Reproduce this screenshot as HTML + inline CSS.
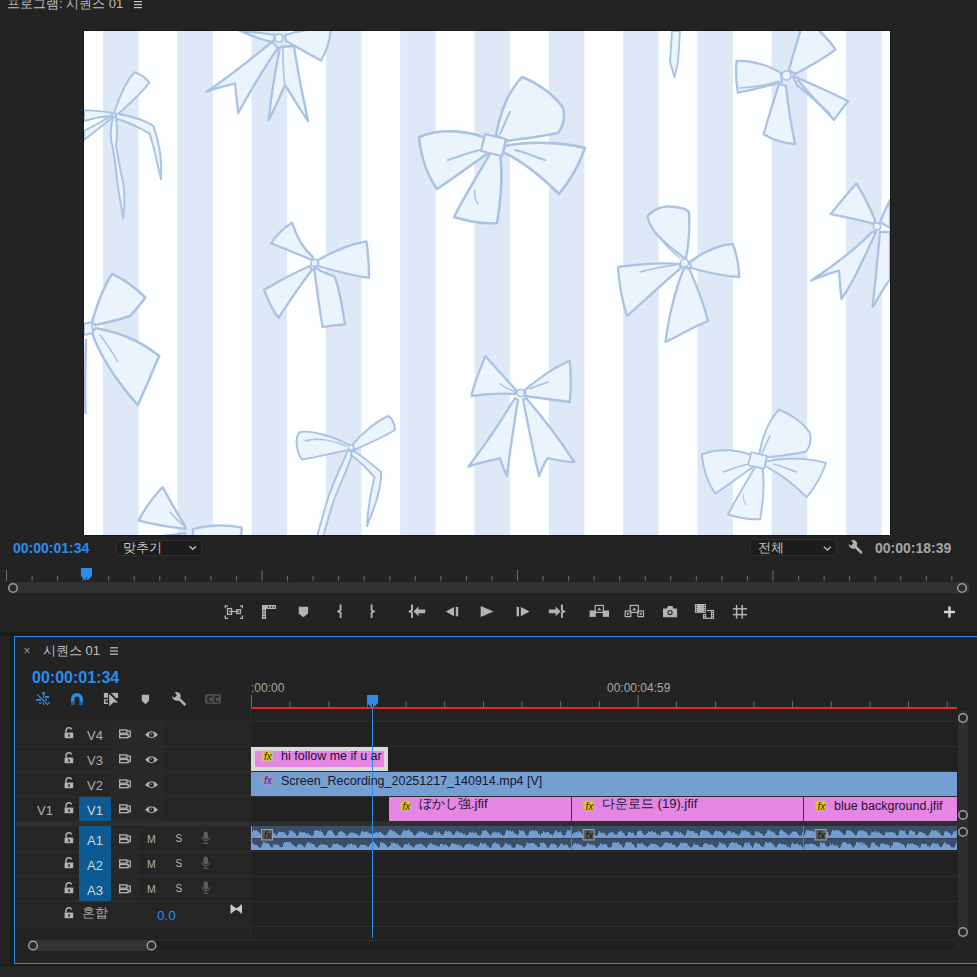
<!DOCTYPE html><html><head><meta charset="utf-8"><style>
*{margin:0;padding:0;box-sizing:border-box}
html,body{width:977px;height:977px;overflow:hidden;background:#252525;font-family:"Liberation Sans",sans-serif;}
.a{position:absolute}
.t{position:absolute;white-space:nowrap;line-height:1}
svg{position:absolute;left:0;top:0}
</style></head><body>
<div class="a" style="left:0;top:0;width:977px;height:632px;background:#232323"></div>
<div class="a" style="left:0;top:632px;width:977px;height:4px;background:#1a1a1a"></div>
<div class="a" style="left:10px;top:632px;width:4px;height:334px;background:#1a1a1a"></div>
<div class="a" style="left:0;top:636px;width:10px;height:328px;background:#232323"></div>
<div class="a" style="left:0;top:964px;width:977px;height:2px;background:#1a1a1a"></div>
<div class="t" style="left:7px;top:-3px;font-size:13px;color:#bdbdbd">프로그램: 시퀀스 01</div>
<div class="a" style="left:84px;top:31px;width:806px;height:504px;background:#fdfeff;overflow:hidden;box-shadow:0 0 0 1px #161616"><svg width="806" height="504" viewBox="0 0 806 504"><defs><filter id="bl" x="-5%" y="-5%" width="110%" height="110%"><feGaussianBlur stdDeviation="0.7"/></filter></defs><g filter="url(#bl)"><rect x="-10" y="-10" width="826" height="524" fill="#fdfeff"/><rect x="19.0" y="0" width="35.5" height="504" fill="#dee8f6"/><rect x="93.3" y="0" width="35.5" height="504" fill="#dee8f6"/><rect x="167.6" y="0" width="35.5" height="504" fill="#dee8f6"/><rect x="241.9" y="0" width="35.5" height="504" fill="#dee8f6"/><rect x="316.2" y="0" width="35.5" height="504" fill="#dee8f6"/><rect x="390.5" y="0" width="35.5" height="504" fill="#dee8f6"/><rect x="464.8" y="0" width="35.5" height="504" fill="#dee8f6"/><rect x="539.1" y="0" width="35.5" height="504" fill="#dee8f6"/><rect x="613.4" y="0" width="35.5" height="504" fill="#dee8f6"/><rect x="687.7" y="0" width="35.5" height="504" fill="#dee8f6"/><rect x="762.0" y="0" width="35.5" height="504" fill="#dee8f6"/><rect x="836.3" y="0" width="35.5" height="504" fill="#dee8f6"/><g transform="translate(-84,-31)"><path d="M 490.0,140.0 C 470.0,130.0 440.0,128.0 419.0,137.0 C 421.0,158.0 428.0,176.0 437.0,189.0 C 455.0,177.0 474.0,163.0 491.0,151.0 Z" fill="#ebf3fc" stroke="#aac2e3" stroke-width="2.53" stroke-linejoin="round"/><path d="M 496.0,135.0 C 500.0,112.0 508.0,92.0 522.0,77.0 C 540.0,84.0 556.0,97.0 563.0,108.0 C 566.0,120.0 562.0,128.0 558.0,133.0 C 540.0,137.0 520.0,139.0 505.0,141.0 Z" fill="#ebf3fc" stroke="#aac2e3" stroke-width="2.53" stroke-linejoin="round"/><path d="M 505.0,146.0 C 530.0,141.0 560.0,142.0 585.0,148.0 C 579.0,165.0 569.0,182.0 559.0,194.0 C 541.0,176.0 522.0,161.0 503.0,152.0 Z" fill="#ebf3fc" stroke="#aac2e3" stroke-width="2.53" stroke-linejoin="round"/><path d="M 491.0,152.0 C 478.0,175.0 464.0,197.0 454.0,217.0 C 470.0,222.0 485.0,224.0 497.0,223.0 C 501.0,200.0 503.0,176.0 500.0,154.0 Z" fill="#ebf3fc" stroke="#aac2e3" stroke-width="2.53" stroke-linejoin="round"/><path d="M 485.0,134.0 L 506.0,139.0 L 502.0,156.0 L 481.0,151.0 Z" fill="#ebf3fc" stroke="#aac2e3" stroke-width="2.30" stroke-linejoin="round"/><path d="M 448.0,160.0 C 460.0,156.0 470.0,152.0 480.0,150.0" fill="none" stroke="#aac2e3" stroke-width="2.2" stroke-linecap="round"/><path d="M 515.0,150.0 C 525.0,152.0 535.0,157.0 545.0,160.0" fill="none" stroke="#aac2e3" stroke-width="2.2" stroke-linecap="round"/><path d="M 510.0,112.0 C 506.0,120.0 503.0,128.0 500.0,134.0" fill="none" stroke="#aac2e3" stroke-width="2.0" stroke-linecap="round"/><path d="M 475.0,190.0 C 474.0,196.0 475.0,200.0 478.0,204.0" fill="none" stroke="#aac2e3" stroke-width="1.4" stroke-linecap="round"/><path d="M 755.0,456.8 C 740.0,449.2 717.5,447.8 701.8,454.5 C 703.2,470.2 708.5,483.8 715.2,493.5 C 728.8,484.5 743.0,474.0 755.8,465.0 Z" fill="#ebf3fc" stroke="#aac2e3" stroke-width="1.90" stroke-linejoin="round"/><path d="M 759.5,453.0 C 762.5,435.8 768.5,420.8 779.0,409.5 C 792.5,414.8 804.5,424.5 809.8,432.8 C 812.0,441.8 809.0,447.8 806.0,451.5 C 792.5,454.5 777.5,456.0 766.2,457.5 Z" fill="#ebf3fc" stroke="#aac2e3" stroke-width="1.90" stroke-linejoin="round"/><path d="M 766.2,461.2 C 785.0,457.5 807.5,458.2 826.2,462.8 C 821.8,475.5 814.2,488.2 806.8,497.2 C 793.2,483.8 779.0,472.5 764.8,465.8 Z" fill="#ebf3fc" stroke="#aac2e3" stroke-width="1.90" stroke-linejoin="round"/><path d="M 755.8,465.8 C 746.0,483.0 735.5,499.5 728.0,514.5 C 740.0,518.2 751.2,519.8 760.2,519.0 C 763.2,501.8 764.8,483.8 762.5,467.2 Z" fill="#ebf3fc" stroke="#aac2e3" stroke-width="1.90" stroke-linejoin="round"/><path d="M 751.2,452.2 L 767.0,456.0 L 764.0,468.8 L 748.2,465.0 Z" fill="#ebf3fc" stroke="#aac2e3" stroke-width="1.72" stroke-linejoin="round"/><path d="M 723.5,471.8 C 732.5,468.8 740.0,465.8 747.5,464.2" fill="none" stroke="#aac2e3" stroke-width="1.6500000000000001" stroke-linecap="round"/><path d="M 773.8,464.2 C 781.2,465.8 788.8,469.5 796.2,471.8" fill="none" stroke="#aac2e3" stroke-width="1.6500000000000001" stroke-linecap="round"/><path d="M 770.0,435.8 C 767.0,441.8 764.8,447.8 762.5,452.2" fill="none" stroke="#aac2e3" stroke-width="1.5" stroke-linecap="round"/><path d="M 743.8,494.2 C 743.0,498.8 743.8,501.8 746.0,504.8" fill="none" stroke="#aac2e3" stroke-width="1.0499999999999998" stroke-linecap="round"/><path d="M684,258 C668,245 650,233 647.5,216 C655,208 664,206 669,206.5 C680,207 688,209 689,213 C690,232 688,248 686,258 Z" fill="#ebf3fc" stroke="#aac2e3" stroke-width="2.30" stroke-linejoin="round"/><path d="M690,262 C703,252 718,245 732.7,244 C737,255 739,266 739.2,277 C722,276 705,272 691,268 Z" fill="#ebf3fc" stroke="#aac2e3" stroke-width="2.30" stroke-linejoin="round"/><path d="M679,264 C660,262 640,264 618,267 C619,285 622,300 627,316 C645,300 663,283 681,268 Z" fill="#ebf3fc" stroke="#aac2e3" stroke-width="2.30" stroke-linejoin="round"/><path d="M684,268 C675,290 668,320 665.5,342 C680,335 695,326 708,321 C703,300 695,282 689,268 Z" fill="#ebf3fc" stroke="#aac2e3" stroke-width="2.30" stroke-linejoin="round"/><circle cx="684.5" cy="263" r="4" fill="#ebf3fc" stroke="#aac2e3" stroke-width="1.6"/><path d="M657,234 C665,245 672,252 680,258" fill="none" stroke="#aac2e3" stroke-width="1.4" stroke-linecap="round"/><path d="M640,272 C655,268 665,266 676,265" fill="none" stroke="#aac2e3" stroke-width="1.4" stroke-linecap="round"/><path d="M781,73 C770,66 752,60 736.5,61 C735.5,72 736.5,84 737.9,92.6 C752,90 768,86 782,82 Z" fill="#ebf3fc" stroke="#aac2e3" stroke-width="2.30" stroke-linejoin="round"/><path d="M789,70 C793,55 797,42 801,29 L818,29 C825,37 832,43 835.3,49.6 C825,58 812,65 795,74 Z" fill="#ebf3fc" stroke="#aac2e3" stroke-width="2.30" stroke-linejoin="round"/><path d="M793,76 C812,84 832,93 848.2,101.2 C843,108 838,114 833.9,119.8 C822,106 810,95 797,85 Z" fill="#ebf3fc" stroke="#aac2e3" stroke-width="2.30" stroke-linejoin="round"/><path d="M779,84 C774,100 768,118 763.7,134.2 C773,140 785,143 795.2,144.2 C791,125 788,105 786,86 Z" fill="#ebf3fc" stroke="#aac2e3" stroke-width="2.30" stroke-linejoin="round"/><circle cx="786.5" cy="75.5" r="4.5" fill="#ebf3fc" stroke="#aac2e3" stroke-width="1.6"/><path d="M740,88 C755,87 768,85 779,81" fill="none" stroke="#aac2e3" stroke-width="1.6" stroke-linecap="round"/><path d="M798,80 C808,92 818,104 830,114" fill="none" stroke="#aac2e3" stroke-width="2.2" stroke-linecap="round"/><path d="M672,31 L680,31 L678,62 L674.5,77 L670,62 Z" fill="#ebf3fc" stroke="#aac2e3" stroke-width="1.84" stroke-linejoin="round"/><path d="M272,42 C252,58 228,78 206.4,91.6 C216,88 226,86 235,83.4 C236,93 237,103 238.3,112.9 C250,92 262,70 278,48 Z" fill="#ebf3fc" stroke="#aac2e3" stroke-width="2.30" stroke-linejoin="round"/><path d="M280,47 C275,72 271,97 268.6,120.3 C275,108 280,96 285,85 C293,97 300,110 308,121 C304,100 298,75 294,46 Z" fill="#ebf3fc" stroke="#aac2e3" stroke-width="2.30" stroke-linejoin="round"/><path d="M285,35 C300,30 315,28 330.8,29 C330,42 326,52 321,60.5 C310,55 297,47 286,41 Z" fill="#ebf3fc" stroke="#aac2e3" stroke-width="2.30" stroke-linejoin="round"/><path d="M275,35 C262,33 248,32 236,29 C245,33 260,40 273,42 Z" fill="#ebf3fc" stroke="#aac2e3" stroke-width="2.30" stroke-linejoin="round"/><circle cx="279" cy="38" r="4" fill="#ebf3fc" stroke="#aac2e3" stroke-width="1.6"/><path d="M283,47 C283,65 284,80 285,85" fill="none" stroke="#aac2e3" stroke-width="1.6" stroke-linecap="round"/><path d="M312,260 C298,254 282,248 271.3,243.3 C276,235 284,228 292,222.6 C296,235 302,248 313,257 Z" fill="#ebf3fc" stroke="#aac2e3" stroke-width="2.30" stroke-linejoin="round"/><path d="M318,260 C332,252 350,244 366.5,241.3 C368,252 369,266 369,277.9 C355,276 342,273 318,266 Z" fill="#ebf3fc" stroke="#aac2e3" stroke-width="2.30" stroke-linejoin="round"/><path d="M310,266 C295,272 278,282 264,289.8 C268,300 272,310 278.6,317.8 C289,302 300,285 312,270 Z" fill="#ebf3fc" stroke="#aac2e3" stroke-width="2.30" stroke-linejoin="round"/><path d="M314,268 C316,280 318,300 322.5,327 C330,326 338,325 345,324.4 C342,305 338,285 334.5,276.5 C328,274 320,271 316,268 Z" fill="#ebf3fc" stroke="#aac2e3" stroke-width="2.30" stroke-linejoin="round"/><circle cx="314.6" cy="263" r="3.6" fill="#ebf3fc" stroke="#aac2e3" stroke-width="1.6"/><path d="M92,322 C97,305 104,285 112.4,273.8 C125,280 138,290 145.4,297.6 C140,305 135,311 130,316 C118,320 105,323 95,325 Z" fill="#ebf3fc" stroke="#aac2e3" stroke-width="2.53" stroke-linejoin="round"/><path d="M92,332 C97,350 115,380 137.8,405 C145,390 152,372 159.3,356 C145,345 130,335 96,328 Z" fill="#ebf3fc" stroke="#aac2e3" stroke-width="2.53" stroke-linejoin="round"/><path d="M84,324 L92,322 L93,333 L84,335 Z" fill="#ebf3fc" stroke="#aac2e3" stroke-width="1.84" stroke-linejoin="round"/><path d="M86,340 C85,370 85,395 85.5,413" fill="none" stroke="#aac2e3" stroke-width="2.4" stroke-linecap="round"/><path d="M100,335 C108,345 114,355 118,362" fill="none" stroke="#aac2e3" stroke-width="1.4" stroke-linecap="round"/><path d="M874,224 C860,220 845,217 830.5,214.2 C838,205 848,193 856.3,183.5 C864,195 870,208 875,220 Z" fill="#ebf3fc" stroke="#aac2e3" stroke-width="2.30" stroke-linejoin="round"/><path d="M872,232 C855,250 830,268 810.9,280.6 C820,277 830,273 839,270.7 C840,285 841,295 841.4,299 C855,280 865,255 876,232 Z" fill="#ebf3fc" stroke="#aac2e3" stroke-width="2.30" stroke-linejoin="round"/><path d="M880,232 C878,255 875,285 872.6,307 C880,295 885,285 890,280 L890,232 Z" fill="#ebf3fc" stroke="#aac2e3" stroke-width="2.30" stroke-linejoin="round"/><path d="M880,222 C884,212 888,205 890,200 L890,228 Z" fill="#ebf3fc" stroke="#aac2e3" stroke-width="2.30" stroke-linejoin="round"/><circle cx="877" cy="226.5" r="3.6" fill="#ebf3fc" stroke="#aac2e3" stroke-width="1.6"/><path d="M516,390 C505,378 494,366 485.3,356 C480,370 474,383 471.5,396 C485,394 500,393 515,394 Z" fill="#ebf3fc" stroke="#aac2e3" stroke-width="2.30" stroke-linejoin="round"/><path d="M525,390 C537,380 552,368 569.8,360.8 C571,375 571,390 569.8,402 C555,400 540,398 525,396 Z" fill="#ebf3fc" stroke="#aac2e3" stroke-width="2.30" stroke-linejoin="round"/><path d="M515,398 C502,420 485,445 468.4,466.8 C480,462 495,460 500,458 C502,465 504,470 506.8,476 C510,450 514,425 518,400 Z" fill="#ebf3fc" stroke="#aac2e3" stroke-width="2.30" stroke-linejoin="round"/><path d="M523,399 C528,425 533,450 539,476 C542,468 545,462 548,458 C556,460 566,462 574.4,462 C560,440 545,420 526,398 Z" fill="#ebf3fc" stroke="#aac2e3" stroke-width="2.30" stroke-linejoin="round"/><circle cx="520.6" cy="393" r="3.8" fill="#ebf3fc" stroke="#aac2e3" stroke-width="1.6"/><path d="M500,384 C505,388 510,390 514,391" fill="none" stroke="#aac2e3" stroke-width="1.6" stroke-linecap="round"/><path d="M530,389 C536,386 542,384 548,382" fill="none" stroke="#aac2e3" stroke-width="1.6" stroke-linecap="round"/><path d="M186,529 C170,527 150,524 138.6,520.4 C145,508 154,496 162.6,487.2 C170,500 176,512 184,524 Z" fill="#ebf3fc" stroke="#aac2e3" stroke-width="2.30" stroke-linejoin="round"/><path d="M193,529 C208,525 225,524 241.8,527.7 C242,532 241,535 240,537 L193,537 Z" fill="#ebf3fc" stroke="#aac2e3" stroke-width="2.30" stroke-linejoin="round"/><path d="M185,533 C175,535 165,536 150,537 L186,537 Z" fill="#ebf3fc" stroke="#aac2e3" stroke-width="2.30" stroke-linejoin="round"/><path d="M170,512 C175,518 180,522 184,526" fill="none" stroke="#aac2e3" stroke-width="1.4" stroke-linecap="round"/><path d="M114,113 C120,95 127,80 134.5,72.2 C140,74 146,78 149.3,82.6 C140,95 128,105 117,115 Z" fill="#ebf3fc" stroke="#aac2e3" stroke-width="1.95" stroke-linejoin="round"/><path d="M112,113 C102,111 92,110 84,110.5 L84,121 C95,118 104,116 112,116 Z" fill="#ebf3fc" stroke="#aac2e3" stroke-width="1.95" stroke-linejoin="round"/><path d="M112,118 C103,125 93,133 84,140 L84,131 C93,126 103,121 111,116 Z" fill="#ebf3fc" stroke="#aac2e3" stroke-width="1.95" stroke-linejoin="round"/><path d="M116,113.5 C130,116 145,120 153.5,126 C159,142 162.5,160 161,179.5 C157.5,165 154.5,148 149.5,133.5 C140,128 128,122 116,118.5 Z" fill="#ebf3fc" stroke="#aac2e3" stroke-width="1.95" stroke-linejoin="round"/><path d="M113,117 C110,130 110,140 112.7,147 C114,157 116,165 116.2,173 C118,190 121,205 123.2,218.4 C125,205 126,190 121,173 C119,162 117,152 116,145 C118,135 117,125 116,117 Z" fill="#ebf3fc" stroke="#aac2e3" stroke-width="1.95" stroke-linejoin="round"/><path d="M348,450 C342,465 334,480 328,498 C324,512 320,525 317,537 L323.5,537 C326,525 330,512 334,500 C340,484 348,468 353,452 Z" fill="#ebf3fc" stroke="#aac2e3" stroke-width="1.95" stroke-linejoin="round"/><path d="M352,450 C362,456 372,464 381,472 C381.5,490 374,508 367,526 C367.5,508 371.5,490 374.5,477 C367,469 360,461 351,455 Z" fill="#ebf3fc" stroke="#aac2e3" stroke-width="1.95" stroke-linejoin="round"/><path d="M349,445 C335,437 312,430 300,432 C294.5,436 296,452 302,459.5 C315,458 335,452 349,450 Z" fill="#ebf3fc" stroke="#aac2e3" stroke-width="1.95" stroke-linejoin="round"/><path d="M305,441 C318,437 335,441 346,446" fill="none" stroke="#aac2e3" stroke-width="1.5" stroke-linecap="round"/><path d="M353,444 C362,433 377,421 388,416 C392,418 395,424 395,430 C383,437 368,444 354,450 Z" fill="#ebf3fc" stroke="#aac2e3" stroke-width="1.95" stroke-linejoin="round"/><circle cx="351" cy="447.5" r="2.6" fill="#ebf3fc" stroke="#aac2e3" stroke-width="1.4"/></g></g></svg></div>
<div class="t" style="left:13px;top:541px;font-size:14px;font-weight:bold;color:#2d8ceb">00:00:01:34</div>
<div class="a" style="left:116px;top:540px;width:86px;height:16px;background:#1d1d1d;border:1px solid #2f2f2f;border-radius:3px"></div>
<div class="t" style="left:123px;top:541px;font-size:13px;color:#c8c8c8">맞추기</div>
<div class="a" style="left:750px;top:539px;width:87px;height:17px;background:#1d1d1d;border:1px solid #2f2f2f;border-radius:3px"></div>
<div class="t" style="left:758px;top:541px;font-size:13px;color:#c8c8c8">전체</div>
<div class="t" style="left:875px;top:541px;font-size:14px;font-weight:bold;color:#a6a6a6">00:00:18:39</div>
<div class="a" style="left:14px;top:636px;width:980px;height:328px;border:1px solid #2d8ceb;background:#232323"></div>
<svg width="977" height="977" viewBox="0 0 977 977">
<rect x="134" y="1" width="8" height="1.2" fill="#c4c4c4"/>
<rect x="134" y="4" width="8" height="1.2" fill="#c4c4c4"/>
<rect x="134" y="7" width="8" height="1.2" fill="#c4c4c4"/>
<rect x="110" y="647.2" width="8" height="1.2" fill="#c4c4c4"/>
<rect x="110" y="650.4" width="8" height="1.2" fill="#c4c4c4"/>
<rect x="110" y="653.6" width="8" height="1.2" fill="#c4c4c4"/>
<rect x="6.00" y="570" width="1" height="11" fill="#6e6e6e"/>
<rect x="31.55" y="576" width="1" height="5" fill="#6e6e6e"/>
<rect x="57.10" y="576" width="1" height="5" fill="#6e6e6e"/>
<rect x="82.65" y="576" width="1" height="5" fill="#6e6e6e"/>
<rect x="108.20" y="576" width="1" height="5" fill="#6e6e6e"/>
<rect x="133.75" y="576" width="1" height="5" fill="#6e6e6e"/>
<rect x="159.30" y="576" width="1" height="5" fill="#6e6e6e"/>
<rect x="184.85" y="576" width="1" height="5" fill="#6e6e6e"/>
<rect x="210.40" y="576" width="1" height="5" fill="#6e6e6e"/>
<rect x="235.95" y="576" width="1" height="5" fill="#6e6e6e"/>
<rect x="261.50" y="570" width="1" height="11" fill="#6e6e6e"/>
<rect x="287.05" y="576" width="1" height="5" fill="#6e6e6e"/>
<rect x="312.60" y="576" width="1" height="5" fill="#6e6e6e"/>
<rect x="338.15" y="576" width="1" height="5" fill="#6e6e6e"/>
<rect x="363.70" y="576" width="1" height="5" fill="#6e6e6e"/>
<rect x="389.25" y="576" width="1" height="5" fill="#6e6e6e"/>
<rect x="414.80" y="576" width="1" height="5" fill="#6e6e6e"/>
<rect x="440.35" y="576" width="1" height="5" fill="#6e6e6e"/>
<rect x="465.90" y="576" width="1" height="5" fill="#6e6e6e"/>
<rect x="491.45" y="576" width="1" height="5" fill="#6e6e6e"/>
<rect x="517.00" y="570" width="1" height="11" fill="#6e6e6e"/>
<rect x="542.55" y="576" width="1" height="5" fill="#6e6e6e"/>
<rect x="568.10" y="576" width="1" height="5" fill="#6e6e6e"/>
<rect x="593.65" y="576" width="1" height="5" fill="#6e6e6e"/>
<rect x="619.20" y="576" width="1" height="5" fill="#6e6e6e"/>
<rect x="644.75" y="576" width="1" height="5" fill="#6e6e6e"/>
<rect x="670.30" y="576" width="1" height="5" fill="#6e6e6e"/>
<rect x="695.85" y="576" width="1" height="5" fill="#6e6e6e"/>
<rect x="721.40" y="576" width="1" height="5" fill="#6e6e6e"/>
<rect x="746.95" y="576" width="1" height="5" fill="#6e6e6e"/>
<rect x="772.50" y="570" width="1" height="11" fill="#6e6e6e"/>
<rect x="798.05" y="576" width="1" height="5" fill="#6e6e6e"/>
<rect x="823.60" y="576" width="1" height="5" fill="#6e6e6e"/>
<rect x="849.15" y="576" width="1" height="5" fill="#6e6e6e"/>
<rect x="874.70" y="576" width="1" height="5" fill="#6e6e6e"/>
<rect x="900.25" y="576" width="1" height="5" fill="#6e6e6e"/>
<rect x="925.80" y="576" width="1" height="5" fill="#6e6e6e"/>
<rect x="951.35" y="576" width="1" height="5" fill="#6e6e6e"/>
<rect x="8" y="582" width="962" height="11" rx="5" fill="#313131"/>
<circle cx="13" cy="588" r="4.3" fill="#2a2a2a" stroke="#9a9a9a" stroke-width="1.6"/>
<circle cx="962" cy="588" r="4.3" fill="#2a2a2a" stroke="#9a9a9a" stroke-width="1.6"/>
<path d="M81 568 H92 V576 L88 580 H85 L81 576 Z" fill="#2d8ceb"/>
<rect x="86" y="577" width="1" height="4" fill="#1c3a5c"/>
<g fill="none" stroke="#b3b3b3" stroke-width="1.3"><path d="M225.3 608.2 V605.9 H228.1"/><path d="M239.9 605.9 H242.4 V608.2"/><path d="M225.3 615.6 V618.3 H228.1"/><path d="M239.9 618.3 H242.4 V615.6"/><rect x="227.55" y="608.55" width="4" height="5.8"/><rect x="236.75" y="609.65" width="3.7" height="3.8"/><path d="M229.2 611.5 H238.6"/></g>
<path d="M262 605 H276 V609 H266 V619 H262 Z" fill="#b3b3b3"/>
<rect x="267.9" y="606.3" width="1.2" height="1.6" fill="#232323"/>
<rect x="270.7" y="606.3" width="1.2" height="1.6" fill="#232323"/>
<rect x="273.4" y="606.3" width="1.2" height="1.6" fill="#232323"/>
<rect x="263.2" y="610.1999999999999" width="1.6" height="1.2" fill="#232323"/>
<rect x="263.2" y="613.1999999999999" width="1.6" height="1.2" fill="#232323"/>
<rect x="263.2" y="616.0" width="1.6" height="1.2" fill="#232323"/>
<path d="M298.7 606.7 H308.1 V613.5 L303.4 617.2 L298.7 613.5 Z" fill="#b3b3b3"/>
<path d="M340.6 604.4 V610 L338.4 611.4 L340.6 612.8 V618" fill="none" stroke="#b3b3b3" stroke-width="1.9"/>
<path d="M371.6 604.4 V610 L373.8 611.4 L371.6 612.8 V618" fill="none" stroke="#b3b3b3" stroke-width="1.9"/>
<path d="M412 604.4 V610 L409.8 611.4 L412 612.8 V618" fill="none" stroke="#b3b3b3" stroke-width="1.9"/>
<path d="M413.5 611.4 L418.5 606.6 V609.6 H425.3 V613.2 H418.5 V616.2 Z" fill="#b3b3b3"/>
<path d="M445.8 611.6 L454 606.9 V616.3 Z" fill="#b3b3b3"/><rect x="455.8" y="606.9" width="2.4" height="9.4" fill="#b3b3b3"/>
<path d="M480.7 605.9 L493.6 611.4 L480.7 616.9 Z" fill="#b3b3b3"/>
<rect x="516.6" y="606.9" width="2.4" height="9.4" fill="#b3b3b3"/><path d="M520.8 606.9 L529.5 611.6 L520.8 616.3 Z" fill="#b3b3b3"/>
<path d="M548.8 609.6 H555.6 V606.6 L560.6 611.4 L555.6 616.2 V613.2 H548.8 Z" fill="#b3b3b3"/>
<path d="M561.9 604.4 V610 L564.1 611.4 L561.9 612.8 V618" fill="none" stroke="#b3b3b3" stroke-width="1.9"/>
<rect x="589.6" y="610.5" width="6.2" height="6.4" fill="#b3b3b3"/><rect x="602.8" y="610.5" width="6.2" height="6.4" fill="#b3b3b3"/>
<rect x="595.2" y="605.4" width="8.2" height="7" fill="none" stroke="#b3b3b3" stroke-width="1.2"/>
<path d="M597.2 610.2 L599.3 607.4 L601.4 610.2 Z" fill="#b3b3b3"/>
<g fill="none" stroke="#b3b3b3" stroke-width="1.2"><rect x="625.2" y="611" width="5.6" height="5.6"/><rect x="637.9" y="611" width="5.6" height="5.6"/><rect x="630.2" y="605.4" width="8.2" height="7"/></g>
<path d="M632.2 610.2 L634.3 607.4 L636.4 610.2 Z" fill="#b3b3b3"/>
<path d="M627 612.2 L629.6 613.8 L627 615.4 Z" fill="#b3b3b3"/><path d="M641.7 612.2 L639.1 613.8 L641.7 615.4 Z" fill="#b3b3b3"/>
<path d="M663 608.4 H666.8 L668 606 H672.4 L673.6 608.4 H677.1 V617.2 H663 Z" fill="#b3b3b3"/>
<circle cx="670" cy="612.6" r="2.6" fill="#232323"/><circle cx="670" cy="612.6" r="1.5" fill="#b3b3b3"/>
<rect x="694.9" y="604" width="11" height="8.9" fill="#b3b3b3"/>
<g fill="#b3b3b3"><rect x="703" y="613.9" width="3.1" height="5"/><rect x="711" y="609.9" width="3.1" height="9"/><rect x="707" y="609.9" width="4" height="1.3"/><rect x="703" y="617.6" width="11" height="1.3"/></g>
<g fill="#232323"><circle cx="696.5" cy="605.5" r="0.6"/><circle cx="704.4" cy="605.5" r="0.6"/><circle cx="696.5" cy="607.5" r="0.6"/><circle cx="704.4" cy="607.5" r="0.6"/><circle cx="696.5" cy="609.5" r="0.6"/><circle cx="704.4" cy="609.5" r="0.6"/><circle cx="696.5" cy="611.5" r="0.6"/><circle cx="704.4" cy="611.5" r="0.6"/><circle cx="704.5" cy="615.5" r="0.6"/><circle cx="704.5" cy="617.5" r="0.6"/><circle cx="712.6" cy="611.5" r="0.6"/><circle cx="712.6" cy="613.5" r="0.6"/><circle cx="712.6" cy="615.5" r="0.6"/><circle cx="712.6" cy="617.5" r="0.6"/></g>
<g stroke="#b3b3b3" stroke-width="1.5"><path d="M736.6 604.9 V618.7"/><path d="M742.2 604.9 V618.7"/><path d="M732.8 608.8 H747"/><path d="M732.8 614.6 H747"/></g>
<g stroke="#d6d6d6" stroke-width="2.4"><path d="M949.5 606.5 V617.5"/><path d="M944 612 H955"/></g>
<g fill="#2d8ceb"><rect x="42.2" y="691.9" width="2.8" height="2.3" rx="0.6"/><rect x="43.1" y="693.5" width="1.1" height="5"/><rect x="43.1" y="702.6" width="1.1" height="2.4"/><rect x="45" y="696.1" width="4" height="2"/><rect x="36.2" y="699" width="4.9" height="1.8"/><rect x="45.3" y="699" width="1.7" height="1.8"/><rect x="39.1" y="702.3" width="2.7" height="1.4"/><rect x="48" y="702.3" width="1.9" height="1.4"/></g>
<path d="M37.4 694.6 L47.5 704.5" stroke="#232323" stroke-width="2.4"/><path d="M37.4 694.6 L47.5 704.5" stroke="#2d8ceb" stroke-width="1.3" stroke-linecap="round"/>
<path d="M71 705 V699 A6 6 0 0 1 83 699 V705 H79.6 V699 A2.6 2.6 0 0 0 74.4 699 V705 Z" fill="#2d8ceb"/>
<rect x="71" y="701.5" width="3.4" height="3.5" fill="#1e5ea0"/><rect x="79.6" y="701.5" width="3.4" height="3.5" fill="#1e5ea0"/>
<rect x="103.9" y="692.9" width="4.1" height="4.9" fill="#b3b3b3"/>
<path d="M108 699.9 H104.6 V703.3 H108" fill="none" stroke="#b3b3b3" stroke-width="1.4"/>
<rect x="110.8" y="692.9" width="7.2" height="5.1" fill="#b3b3b3"/>
<path d="M109.6 693 L119 702.4" stroke="#232323" stroke-width="2"/>
<path d="M109 693.8 L118 702.6 L113.3 702.5 L109.3 706.3 Z" fill="#b3b3b3"/>
<path d="M141.8 694.7 H149.1 V700.8 L145.45 704.2 L141.8 700.8 Z" fill="#b3b3b3"/>
<path d="M172.2 696 L174.6 697.7 L176.9 695.4 L175.2 692.8 Q175 692.3 174.6 692.2 Q178.4 691.2 180.2 694 Q181.2 696.2 180.3 698.3 L185.8 703.8 Q186.4 705.4 184.6 706 L178.8 700.4 Q176.4 701.4 174.2 700 Q171.8 698.4 172.2 696 Z" fill="#b3b3b3"/>
<rect x="204.9" y="693.9" width="16.1" height="10.1" rx="2.2" fill="#4b4b4b"/>
<g fill="none" stroke="#222" stroke-width="1.5"><path d="M212.2 696.8 Q208 695.6 208 699.3 Q208 702.8 212.2 701.8"/><path d="M219 696.8 Q214.8 695.6 214.8 699.3 Q214.8 702.8 219 701.8"/></g>
<path d="M172.2 696 L174.6 697.7 L176.9 695.4 L175.2 692.8 Q175 692.3 174.6 692.2 Q178.4 691.2 180.2 694 Q181.2 696.2 180.3 698.3 L185.8 703.8 Q186.4 705.4 184.6 706 L178.8 700.4 Q176.4 701.4 174.2 700 Q171.8 698.4 172.2 696 Z" fill="#b3b3b3" transform="translate(676.5,-152)"/>
<path d="M189.6 546.2 L192.8 549.3 L196 546.2" fill="none" stroke="#c0c0c0" stroke-width="1.3"/>
<path d="M823.8 546.6 L827.4 550 L831 546.6" fill="none" stroke="#c0c0c0" stroke-width="1.3"/>
<rect x="15" y="721" width="235" height="205" fill="#252525"/>
<rect x="251" y="721" width="706" height="217" fill="#212121"/>
<rect x="111" y="722" width="54" height="24" fill="#282828"/>
<rect x="111" y="747" width="54" height="24" fill="#282828"/>
<rect x="111" y="772" width="54" height="24" fill="#282828"/>
<rect x="111" y="797" width="54" height="24" fill="#282828"/>
<rect x="111" y="827" width="27" height="24" fill="#282828"/>
<rect x="111" y="852" width="27" height="24" fill="#282828"/>
<rect x="111" y="877" width="27" height="24" fill="#282828"/>
<rect x="15" y="721" width="942" height="1" fill="#2d2d2d"/>
<rect x="15" y="746" width="942" height="1" fill="#2d2d2d"/>
<rect x="15" y="771" width="942" height="1" fill="#2d2d2d"/>
<rect x="15" y="796" width="942" height="1" fill="#2d2d2d"/>
<rect x="15" y="851" width="942" height="1" fill="#2d2d2d"/>
<rect x="15" y="876" width="942" height="1" fill="#2d2d2d"/>
<rect x="15" y="901" width="942" height="1" fill="#2d2d2d"/>
<rect x="15" y="926" width="942" height="1" fill="#2d2d2d"/>
<rect x="15" y="821" width="953" height="5" fill="#2e2e2e"/>
<rect x="250" y="710" width="1" height="228" fill="#2a2a2a"/>
<rect x="251.00" y="695" width="1" height="12" fill="#6e6e6e"/>
<rect x="289.65" y="701" width="1" height="6" fill="#6e6e6e"/>
<rect x="328.30" y="701" width="1" height="6" fill="#6e6e6e"/>
<rect x="366.95" y="701" width="1" height="6" fill="#6e6e6e"/>
<rect x="405.60" y="701" width="1" height="6" fill="#6e6e6e"/>
<rect x="444.25" y="701" width="1" height="6" fill="#6e6e6e"/>
<rect x="482.90" y="701" width="1" height="6" fill="#6e6e6e"/>
<rect x="521.55" y="701" width="1" height="6" fill="#6e6e6e"/>
<rect x="560.20" y="701" width="1" height="6" fill="#6e6e6e"/>
<rect x="598.85" y="701" width="1" height="6" fill="#6e6e6e"/>
<rect x="637.50" y="695" width="1" height="12" fill="#6e6e6e"/>
<rect x="676.15" y="701" width="1" height="6" fill="#6e6e6e"/>
<rect x="714.80" y="701" width="1" height="6" fill="#6e6e6e"/>
<rect x="753.45" y="701" width="1" height="6" fill="#6e6e6e"/>
<rect x="792.10" y="701" width="1" height="6" fill="#6e6e6e"/>
<rect x="830.75" y="701" width="1" height="6" fill="#6e6e6e"/>
<rect x="869.40" y="701" width="1" height="6" fill="#6e6e6e"/>
<rect x="908.05" y="701" width="1" height="6" fill="#6e6e6e"/>
<rect x="946.70" y="701" width="1" height="6" fill="#6e6e6e"/>
<rect x="251" y="707" width="706" height="2" fill="#e52a1d"/>
<path d="M66.0 732.6 V730.6 A2.9 2.9 0 0 1 71.6 729.6" fill="none" stroke="#b3b3b3" stroke-width="1.5"/><rect x="64.6" y="732.6" width="8.6" height="5.6" fill="#b3b3b3"/><rect x="68.19999999999999" y="734.2" width="1.5" height="2.6" fill="#232323"/>
<g fill="none" stroke="#b3b3b3" stroke-width="1.3"><rect x="119.65" y="729.9499999999999" width="7.2" height="3.2"/><rect x="119.65" y="734.5" width="8.4" height="3.2"/><path d="M126.9 731.0999999999999 H130.3 V736.5 H128.1"/></g>
<path d="M145 734.6999999999999 Q151.5 727.8 158 734.6999999999999 Q151.5 741.6 145 734.6999999999999 Z" fill="#b3b3b3"/><circle cx="151.5" cy="734.6999999999999" r="2.5" fill="#262626"/><circle cx="151.2" cy="734.3" r="0.8" fill="#888"/>
<path d="M66.0 757.6 V755.6 A2.9 2.9 0 0 1 71.6 754.6" fill="none" stroke="#b3b3b3" stroke-width="1.5"/><rect x="64.6" y="757.6" width="8.6" height="5.6" fill="#b3b3b3"/><rect x="68.19999999999999" y="759.2" width="1.5" height="2.6" fill="#232323"/>
<g fill="none" stroke="#b3b3b3" stroke-width="1.3"><rect x="119.65" y="754.9499999999999" width="7.2" height="3.2"/><rect x="119.65" y="759.5" width="8.4" height="3.2"/><path d="M126.9 756.0999999999999 H130.3 V761.5 H128.1"/></g>
<path d="M145 759.6999999999999 Q151.5 752.8 158 759.6999999999999 Q151.5 766.6 145 759.6999999999999 Z" fill="#b3b3b3"/><circle cx="151.5" cy="759.6999999999999" r="2.5" fill="#262626"/><circle cx="151.2" cy="759.3" r="0.8" fill="#888"/>
<path d="M66.0 782.6 V780.6 A2.9 2.9 0 0 1 71.6 779.6" fill="none" stroke="#b3b3b3" stroke-width="1.5"/><rect x="64.6" y="782.6" width="8.6" height="5.6" fill="#b3b3b3"/><rect x="68.19999999999999" y="784.2" width="1.5" height="2.6" fill="#232323"/>
<g fill="none" stroke="#b3b3b3" stroke-width="1.3"><rect x="119.65" y="779.9499999999999" width="7.2" height="3.2"/><rect x="119.65" y="784.5" width="8.4" height="3.2"/><path d="M126.9 781.0999999999999 H130.3 V786.5 H128.1"/></g>
<path d="M145 784.6999999999999 Q151.5 777.8 158 784.6999999999999 Q151.5 791.6 145 784.6999999999999 Z" fill="#b3b3b3"/><circle cx="151.5" cy="784.6999999999999" r="2.5" fill="#262626"/><circle cx="151.2" cy="784.3" r="0.8" fill="#888"/>
<path d="M66.0 807.6 V805.6 A2.9 2.9 0 0 1 71.6 804.6" fill="none" stroke="#b3b3b3" stroke-width="1.5"/><rect x="64.6" y="807.6" width="8.6" height="5.6" fill="#b3b3b3"/><rect x="68.19999999999999" y="809.2" width="1.5" height="2.6" fill="#232323"/>
<g fill="none" stroke="#b3b3b3" stroke-width="1.3"><rect x="119.65" y="804.9499999999999" width="7.2" height="3.2"/><rect x="119.65" y="809.5" width="8.4" height="3.2"/><path d="M126.9 806.0999999999999 H130.3 V811.5 H128.1"/></g>
<path d="M145 809.6999999999999 Q151.5 802.8 158 809.6999999999999 Q151.5 816.6 145 809.6999999999999 Z" fill="#b3b3b3"/><circle cx="151.5" cy="809.6999999999999" r="2.5" fill="#262626"/><circle cx="151.2" cy="809.3" r="0.8" fill="#888"/>
<rect x="79" y="797" width="32" height="24" fill="#0c5a91"/>
<path d="M66.0 837.6 V835.6 A2.9 2.9 0 0 1 71.6 834.6" fill="none" stroke="#b3b3b3" stroke-width="1.5"/><rect x="64.6" y="837.6" width="8.6" height="5.6" fill="#b3b3b3"/><rect x="68.19999999999999" y="839.2" width="1.5" height="2.6" fill="#232323"/>
<rect x="79" y="826" width="32" height="25" fill="#0c5a91"/>
<g fill="none" stroke="#b3b3b3" stroke-width="1.3"><rect x="119.65" y="834.9499999999999" width="7.2" height="3.2"/><rect x="119.65" y="839.5" width="8.4" height="3.2"/><path d="M126.9 836.0999999999999 H130.3 V841.5 H128.1"/></g>
<rect x="203.6" y="831.5" width="4.4" height="8" rx="2.2" fill="#5c5c5c"/><path d="M201.8 836.7 A4 4 0 0 0 209.8 836.7" fill="none" stroke="#5c5c5c" stroke-width="1"/><rect x="205.3" y="841.1" width="1" height="2" fill="#5c5c5c"/><rect x="203.2" y="842.9" width="5.2" height="1" fill="#5c5c5c"/>
<path d="M66.0 862.6 V860.6 A2.9 2.9 0 0 1 71.6 859.6" fill="none" stroke="#b3b3b3" stroke-width="1.5"/><rect x="64.6" y="862.6" width="8.6" height="5.6" fill="#b3b3b3"/><rect x="68.19999999999999" y="864.2" width="1.5" height="2.6" fill="#232323"/>
<rect x="79" y="851" width="32" height="25" fill="#0c5a91"/>
<g fill="none" stroke="#b3b3b3" stroke-width="1.3"><rect x="119.65" y="859.9499999999999" width="7.2" height="3.2"/><rect x="119.65" y="864.5" width="8.4" height="3.2"/><path d="M126.9 861.0999999999999 H130.3 V866.5 H128.1"/></g>
<rect x="203.6" y="856.5" width="4.4" height="8" rx="2.2" fill="#5c5c5c"/><path d="M201.8 861.7 A4 4 0 0 0 209.8 861.7" fill="none" stroke="#5c5c5c" stroke-width="1"/><rect x="205.3" y="866.1" width="1" height="2" fill="#5c5c5c"/><rect x="203.2" y="867.9" width="5.2" height="1" fill="#5c5c5c"/>
<path d="M66.0 887.6 V885.6 A2.9 2.9 0 0 1 71.6 884.6" fill="none" stroke="#b3b3b3" stroke-width="1.5"/><rect x="64.6" y="887.6" width="8.6" height="5.6" fill="#b3b3b3"/><rect x="68.19999999999999" y="889.2" width="1.5" height="2.6" fill="#232323"/>
<rect x="79" y="876" width="32" height="25" fill="#0c5a91"/>
<g fill="none" stroke="#b3b3b3" stroke-width="1.3"><rect x="119.65" y="884.9499999999999" width="7.2" height="3.2"/><rect x="119.65" y="889.5" width="8.4" height="3.2"/><path d="M126.9 886.0999999999999 H130.3 V891.5 H128.1"/></g>
<rect x="203.6" y="881.5" width="4.4" height="8" rx="2.2" fill="#5c5c5c"/><path d="M201.8 886.7 A4 4 0 0 0 209.8 886.7" fill="none" stroke="#5c5c5c" stroke-width="1"/><rect x="205.3" y="891.1" width="1" height="2" fill="#5c5c5c"/><rect x="203.2" y="892.9" width="5.2" height="1" fill="#5c5c5c"/>
<path d="M66.0 912.6 V910.6 A2.9 2.9 0 0 1 71.6 909.6" fill="none" stroke="#b3b3b3" stroke-width="1.5"/><rect x="64.6" y="912.6" width="8.6" height="5.6" fill="#b3b3b3"/><rect x="68.19999999999999" y="914.2" width="1.5" height="2.6" fill="#232323"/>
<path d="M230.7 904.7 L236.4 908.2 L242 904.7 V913.3 L236.4 909.8 L230.7 913.3 Z" fill="#c8c8c8"/>
<rect x="230.7" y="904.7" width="1.6" height="8.6" fill="#c8c8c8"/><rect x="240.4" y="904.7" width="1.6" height="8.6" fill="#c8c8c8"/>
<rect x="958" y="710" width="10" height="228" rx="5" fill="#2e2e2e"/>
<circle cx="963" cy="718" r="4.2" fill="#262626" stroke="#a0a0a0" stroke-width="1.5"/>
<circle cx="963" cy="815" r="4.2" fill="#262626" stroke="#a0a0a0" stroke-width="1.5"/>
<circle cx="963" cy="832" r="4.2" fill="#262626" stroke="#a0a0a0" stroke-width="1.5"/>
<circle cx="963" cy="932" r="4.2" fill="#262626" stroke="#a0a0a0" stroke-width="1.5"/>
<rect x="151" y="940.5" width="806" height="10" rx="5" fill="#1f1f1f" stroke="#2b2b2b" stroke-width="1"/>
<rect x="30" y="940" width="124" height="11" fill="#333333"/>
<circle cx="33" cy="945.5" r="4.3" fill="#2b2b2b" stroke="#a0a0a0" stroke-width="1.5"/>
<circle cx="151.5" cy="945.5" r="4.3" fill="#2b2b2b" stroke="#a0a0a0" stroke-width="1.5"/>
<rect x="251" y="747" width="137" height="24" fill="#dadada"/>
<rect x="255" y="751" width="129" height="16" fill="#e586e2"/>
<rect x="251" y="772" width="706" height="24" fill="#759ed2"/>
<rect x="389" y="797" width="568" height="24" fill="#e586e2"/>
<rect x="571" y="797" width="1" height="24" fill="#3a3a3a"/>
<rect x="803" y="797" width="1" height="24" fill="#3a3a3a"/>
<rect x="262.0" y="751.0" width="10.5" height="10" fill="#e8c31a" stroke="#b9b9b9" stroke-width="1"/>
<rect x="262.0" y="775.5" width="10.5" height="10" fill="#a58ad8" stroke="#9a9ab0" stroke-width="1"/>
<rect x="400.2" y="800.8" width="10.5" height="10" fill="#e8c31a" stroke="#c9a0c0" stroke-width="1"/>
<rect x="583.1" y="800.8" width="10.5" height="10" fill="#e8c31a" stroke="#c9a0c0" stroke-width="1"/>
<rect x="815.2" y="800.8" width="10.5" height="10" fill="#e8c31a" stroke="#c9a0c0" stroke-width="1"/>
<rect x="251" y="826" width="706" height="24" fill="#3b4f69"/>
<path d="M251 838L251 834.7 L252 834.7L252 832.3 L253 832.3L253 830.0 L254 830.0L254 830.9 L255 830.9L255 830.2 L256 830.2L256 830.0 L257 830.0L257 831.2 L258 831.2L258 832.3 L259 832.3L259 832.8 L260 832.8L260 834.5 L261 834.5L261 835.5 L262 835.5L262 833.7 L263 833.7L263 832.5 L264 832.5L264 830.8 L265 830.8L265 831.7 L266 831.7L266 830.8 L267 830.8L267 831.9 L268 831.9L268 831.8 L269 831.8L269 831.3 L270 831.3L270 832.2 L271 832.2L271 831.9 L272 831.9L272 832.3 L273 832.3L273 832.9 L274 832.9L274 833.7 L275 833.7L275 834.4 L276 834.4L276 836.0 L277 836.0L277 834.1 L278 834.1L278 832.6 L279 832.6L279 831.7 L280 831.7L280 832.1 L281 832.1L281 832.2 L282 832.2L282 831.9 L283 831.9L283 832.6 L284 832.6L284 832.3 L285 832.3L285 834.1 L286 834.1L286 835.1 L287 835.1L287 836.0 L288 836.0L288 834.5 L289 834.5L289 830.7 L290 830.7L290 830.5 L291 830.5L291 831.5 L292 831.5L292 830.5 L293 830.5L293 832.3 L294 832.3L294 832.8 L295 832.8L295 833.6 L296 833.6L296 836.0 L297 836.0L297 835.6 L298 835.6L298 834.4 L299 834.4L299 832.6 L300 832.6L300 831.3 L301 831.3L301 832.3 L302 832.3L302 832.4 L303 832.4L303 832.3 L304 832.3L304 831.8 L305 831.8L305 833.3 L306 833.3L306 833.4 L307 833.4L307 833.5 L308 833.5L308 833.2 L309 833.2L309 835.0 L310 835.0L310 834.5 L311 834.5L311 835.9 L312 835.9L312 835.7 L313 835.7L313 834.8 L314 834.8L314 831.0 L315 831.0L315 830.4 L316 830.4L316 830.1 L317 830.1L317 830.4 L318 830.4L318 831.1 L319 831.1L319 831.1 L320 831.1L320 830.6 L321 830.6L321 832.1 L322 832.1L322 832.3 L323 832.3L323 834.3 L324 834.3L324 836.0 L325 836.0L325 835.5 L326 835.5L326 833.8 L327 833.8L327 831.7 L328 831.7L328 830.5 L329 830.5L329 830.8 L330 830.8L330 830.0 L331 830.0L331 830.1 L332 830.1L332 832.1 L333 832.1L333 833.2 L334 833.2L334 834.5 L335 834.5L335 836.0 L336 836.0L336 835.2 L337 835.2L337 835.4 L338 835.4L338 832.4 L339 832.4L339 831.8 L340 831.8L340 831.6 L341 831.6L341 831.1 L342 831.1L342 831.8 L343 831.8L343 832.5 L344 832.5L344 833.2 L345 833.2L345 834.1 L346 834.1L346 836.0 L347 836.0L347 835.6 L348 835.6L348 834.3 L349 834.3L349 833.6 L350 833.6L350 832.6 L351 832.6L351 832.5 L352 832.5L352 832.8 L353 832.8L353 832.6 L354 832.6L354 833.3 L355 833.3L355 833.6 L356 833.6L356 833.9 L357 833.9L357 834.7 L358 834.7L358 835.0 L359 835.0L359 836.0 L360 836.0L360 834.3 L361 834.3L361 831.8 L362 831.8L362 831.0 L363 831.0L363 831.4 L364 831.4L364 832.2 L365 832.2L365 831.7 L366 831.7L366 830.9 L367 830.9L367 832.0 L368 832.0L368 832.7 L369 832.7L369 833.6 L370 833.6L370 833.3 L371 833.3L371 834.2 L372 834.2L372 835.6 L373 835.6L373 833.7 L374 833.7L374 833.0 L375 833.0L375 832.6 L376 832.6L376 832.0 L377 832.0L377 833.1 L378 833.1L378 832.4 L379 832.4L379 831.7 L380 831.7L380 832.1 L381 832.1L381 832.7 L382 832.7L382 834.0 L383 834.0L383 834.4 L384 834.4L384 835.5 L385 835.5L385 835.1 L386 835.1L386 835.4 L387 835.4L387 833.6 L388 833.6L388 831.5 L389 831.5L389 830.0 L390 830.0L390 830.0 L391 830.0L391 830.1 L392 830.1L392 831.2 L393 831.2L393 830.8 L394 830.8L394 831.2 L395 831.2L395 832.3 L396 832.3L396 833.1 L397 833.1L397 833.7 L398 833.7L398 834.8 L399 834.8L399 835.3 L400 835.3L400 835.6 L401 835.6L401 833.7 L402 833.7L402 832.3 L403 832.3L403 830.3 L404 830.3L404 830.5 L405 830.5L405 830.7 L406 830.7L406 830.8 L407 830.8L407 830.2 L408 830.2L408 830.0 L409 830.0L409 830.1 L410 830.1L410 831.4 L411 831.4L411 832.0 L412 832.0L412 832.7 L413 832.7L413 835.1 L414 835.1L414 835.3 L415 835.3L415 835.2 L416 835.2L416 833.8 L417 833.8L417 833.2 L418 833.2L418 831.5 L419 831.5L419 832.4 L420 832.4L420 831.0 L421 831.0L421 831.5 L422 831.5L422 832.1 L423 832.1L423 831.7 L424 831.7L424 833.1 L425 833.1L425 833.2 L426 833.2L426 832.1 L427 832.1L427 834.4 L428 834.4L428 834.0 L429 834.0L429 834.9 L430 834.9L430 835.3 L431 835.3L431 835.3 L432 835.3L432 834.4 L433 834.4L433 833.5 L434 833.5L434 831.2 L435 831.2L435 831.5 L436 831.5L436 832.8 L437 832.8L437 831.8 L438 831.8L438 833.1 L439 833.1L439 832.1 L440 832.1L440 834.3 L441 834.3L441 833.9 L442 833.9L442 836.0 L443 836.0L443 834.0 L444 834.0L444 832.4 L445 832.4L445 830.9 L446 830.9L446 830.6 L447 830.6L447 832.1 L448 832.1L448 831.1 L449 831.1L449 831.0 L450 831.0L450 832.0 L451 832.0L451 832.7 L452 832.7L452 834.4 L453 834.4L453 835.0 L454 835.0L454 834.5 L455 834.5L455 832.3 L456 832.3L456 831.2 L457 831.2L457 831.6 L458 831.6L458 831.5 L459 831.5L459 832.8 L460 832.8L460 832.9 L461 832.9L461 832.2 L462 832.2L462 833.5 L463 833.5L463 834.1 L464 834.1L464 833.7 L465 833.7L465 834.7 L466 834.7L466 835.6 L467 835.6L467 835.1 L468 835.1L468 833.9 L469 833.9L469 832.6 L470 832.6L470 832.1 L471 832.1L471 833.1 L472 833.1L472 831.6 L473 831.6L473 833.3 L474 833.3L474 833.0 L475 833.0L475 832.1 L476 832.1L476 833.3 L477 833.3L477 834.7 L478 834.7L478 835.2 L479 835.2L479 835.6 L480 835.6L480 835.5 L481 835.5L481 833.8 L482 833.8L482 830.7 L483 830.7L483 831.0 L484 831.0L484 830.7 L485 830.7L485 830.2 L486 830.2L486 830.6 L487 830.6L487 832.3 L488 832.3L488 833.5 L489 833.5L489 834.2 L490 834.2L490 836.0 L491 836.0L491 834.2 L492 834.2L492 832.4 L493 832.4L493 831.2 L494 831.2L494 832.7 L495 832.7L495 831.8 L496 831.8L496 832.1 L497 832.1L497 833.2 L498 833.2L498 832.1 L499 832.1L499 832.5 L500 832.5L500 834.5 L501 834.5L501 833.9 L502 833.9L502 835.8 L503 835.8L503 835.8 L504 835.8L504 835.1 L505 835.1L505 832.4 L506 832.4L506 830.1 L507 830.1L507 830.6 L508 830.6L508 831.0 L509 831.0L509 830.9 L510 830.9L510 830.3 L511 830.3L511 831.7 L512 831.7L512 830.9 L513 830.9L513 831.8 L514 831.8L514 833.3 L515 833.3L515 833.7 L516 833.7L516 834.3 L517 834.3L517 835.6 L518 835.6L518 834.0 L519 834.0L519 830.0 L520 830.0L520 830.7 L521 830.7L521 830.7 L522 830.7L522 831.3 L523 831.3L523 830.3 L524 830.3L524 832.4 L525 832.4L525 834.4 L526 834.4L526 835.7 L527 835.7L527 835.6 L528 835.6L528 834.4 L529 834.4L529 831.6 L530 831.6L530 830.7 L531 830.7L531 831.0 L532 831.0L532 830.0 L533 830.0L533 830.6 L534 830.6L534 831.4 L535 831.4L535 830.0 L536 830.0L536 831.0 L537 831.0L537 831.6 L538 831.6L538 833.9 L539 833.9L539 833.7 L540 833.7L540 836.0 L541 836.0L541 833.6 L542 833.6L542 833.1 L543 833.1L543 831.3 L544 831.3L544 832.0 L545 832.0L545 833.2 L546 833.2L546 832.1 L547 832.1L547 831.9 L548 831.9L548 832.1 L549 832.1L549 833.8 L550 833.8L550 834.6 L551 834.6L551 834.0 L552 834.0L552 835.4 L553 835.4L553 834.2 L554 834.2L554 832.6 L555 832.6L555 830.6 L556 830.6L556 830.4 L557 830.4L557 832.3 L558 832.3L558 832.5 L559 832.5L559 831.8 L560 831.8L560 831.6 L561 831.6L561 833.3 L562 833.3L562 834.9 L563 834.9L563 835.7 L564 835.7L564 835.3 L565 835.3L565 834.7 L566 834.7L566 832.1 L567 832.1L567 830.0 L568 830.0L568 830.0 L569 830.0L569 830.8 L570 830.8L570 830.0 L571 830.0L571 838 Z" fill="#729dd2"/>
<path d="M251 850L251 845.9 L252 845.9L252 843.6 L253 843.6L253 843.7 L254 843.7L254 844.6 L255 844.6L255 844.9 L256 844.9L256 845.1 L257 845.1L257 845.5 L258 845.5L258 847.1 L259 847.1L259 847.7 L260 847.7L260 847.6 L261 847.6L261 846.4 L262 846.4L262 843.9 L263 843.9L263 842.0 L264 842.0L264 842.5 L265 842.5L265 842.6 L266 842.6L266 843.4 L267 843.4L267 842.9 L268 842.9L268 843.5 L269 843.5L269 844.7 L270 844.7L270 846.6 L271 846.6L271 847.6 L272 847.6L272 847.2 L273 847.2L273 844.1 L274 844.1L274 844.4 L275 844.4L275 844.7 L276 844.7L276 844.4 L277 844.4L277 844.8 L278 844.8L278 845.0 L279 845.0L279 846.2 L280 846.2L280 847.1 L281 847.1L281 847.2 L282 847.2L282 847.1 L283 847.1L283 843.7 L284 843.7L284 842.0 L285 842.0L285 842.8 L286 842.8L286 842.0 L287 842.0L287 842.0 L288 842.0L288 842.2 L289 842.2L289 842.1 L290 842.1L290 842.1 L291 842.1L291 844.0 L292 844.0L292 844.2 L293 844.2L293 845.3 L294 845.3L294 845.8 L295 845.8L295 847.1 L296 847.1L296 847.2 L297 847.2L297 844.6 L298 844.6L298 844.8 L299 844.8L299 843.7 L300 843.7L300 844.4 L301 844.4L301 844.6 L302 844.6L302 845.3 L303 845.3L303 846.2 L304 846.2L304 847.6 L305 847.6L305 846.1 L306 846.1L306 843.9 L307 843.9L307 842.2 L308 842.2L308 842.2 L309 842.2L309 843.4 L310 843.4L310 842.4 L311 842.4L311 843.4 L312 843.4L312 844.0 L313 844.0L313 844.5 L314 844.5L314 844.7 L315 844.7L315 846.8 L316 846.8L316 847.2 L317 847.2L317 847.5 L318 847.5L318 845.8 L319 845.8L319 845.3 L320 845.3L320 844.7 L321 844.7L321 843.8 L322 843.8L322 844.8 L323 844.8L323 844.2 L324 844.2L324 844.8 L325 844.8L325 844.5 L326 844.5L326 845.0 L327 845.0L327 845.8 L328 845.8L328 847.4 L329 847.4L329 847.6 L330 847.6L330 847.7 L331 847.7L331 847.0 L332 847.0L332 845.1 L333 845.1L333 843.4 L334 843.4L334 844.3 L335 844.3L335 844.1 L336 844.1L336 843.7 L337 843.7L337 843.4 L338 843.4L338 844.4 L339 844.4L339 845.0 L340 845.0L340 845.8 L341 845.8L341 845.6 L342 845.6L342 846.6 L343 846.6L343 847.6 L344 847.6L344 847.6 L345 847.6L345 847.0 L346 847.0L346 845.7 L347 845.7L347 845.2 L348 845.2L348 843.4 L349 843.4L349 844.4 L350 844.4L350 843.9 L351 843.9L351 843.3 L352 843.3L352 844.9 L353 844.9L353 843.9 L354 843.9L354 845.1 L355 845.1L355 845.1 L356 845.1L356 846.3 L357 846.3L357 848.0 L358 848.0L358 847.6 L359 847.6L359 846.5 L360 846.5L360 844.7 L361 844.7L361 844.5 L362 844.5L362 845.0 L363 845.0L363 844.8 L364 844.8L364 845.0 L365 845.0L365 844.5 L366 844.5L366 846.7 L367 846.7L367 846.2 L368 846.2L368 847.0 L369 847.0L369 845.8 L370 845.8L370 843.9 L371 843.9L371 842.8 L372 842.8L372 843.0 L373 843.0L373 842.1 L374 842.1L374 843.0 L375 843.0L375 843.9 L376 843.9L376 844.9 L377 844.9L377 846.5 L378 846.5L378 848.0 L379 848.0L379 846.9 L380 846.9L380 842.1 L381 842.1L381 842.8 L382 842.8L382 843.0 L383 843.0L383 842.8 L384 842.8L384 843.6 L385 843.6L385 844.5 L386 844.5L386 845.0 L387 845.0L387 846.9 L388 846.9L388 847.1 L389 847.1L389 846.1 L390 846.1L390 845.3 L391 845.3L391 842.4 L392 842.4L392 843.1 L393 843.1L393 842.7 L394 842.7L394 843.0 L395 843.0L395 843.8 L396 843.8L396 844.4 L397 844.4L397 843.2 L398 843.2L398 845.4 L399 845.4L399 845.6 L400 845.6L400 846.8 L401 846.8L401 848.0 L402 848.0L402 847.6 L403 847.6L403 846.4 L404 846.4L404 844.3 L405 844.3L405 844.1 L406 844.1L406 844.3 L407 844.3L407 844.4 L408 844.4L408 843.3 L409 843.3L409 844.5 L410 844.5L410 845.8 L411 845.8L411 845.7 L412 845.7L412 846.7 L413 846.7L413 847.6 L414 847.6L414 847.2 L415 847.2L415 845.2 L416 845.2L416 844.3 L417 844.3L417 844.2 L418 844.2L418 844.3 L419 844.3L419 843.9 L420 843.9L420 843.5 L421 843.5L421 843.9 L422 843.9L422 844.8 L423 844.8L423 845.4 L424 845.4L424 845.9 L425 845.9L425 847.0 L426 847.0L426 847.9 L427 847.9L427 845.7 L428 845.7L428 845.3 L429 845.3L429 843.4 L430 843.4L430 843.4 L431 843.4L431 843.1 L432 843.1L432 844.4 L433 844.4L433 844.5 L434 844.5L434 844.8 L435 844.8L435 845.1 L436 845.1L436 845.8 L437 845.8L437 845.8 L438 845.8L438 847.0 L439 847.0L439 846.1 L440 846.1L440 843.9 L441 843.9L441 844.1 L442 844.1L442 844.1 L443 844.1L443 845.4 L444 845.4L444 844.8 L445 844.8L445 844.2 L446 844.2L446 845.1 L447 845.1L447 846.0 L448 846.0L448 846.7 L449 846.7L449 847.1 L450 847.1L450 845.2 L451 845.2L451 843.6 L452 843.6L452 843.1 L453 843.1L453 843.6 L454 843.6L454 843.9 L455 843.9L455 843.8 L456 843.8L456 844.5 L457 844.5L457 844.4 L458 844.4L458 845.6 L459 845.6L459 844.6 L460 844.6L460 846.2 L461 846.2L461 845.5 L462 845.5L462 846.7 L463 846.7L463 848.0 L464 848.0L464 846.3 L465 846.3L465 844.6 L466 844.6L466 844.2 L467 844.2L467 844.4 L468 844.4L468 843.7 L469 843.7L469 843.7 L470 843.7L470 844.2 L471 844.2L471 844.6 L472 844.6L472 844.1 L473 844.1L473 845.6 L474 845.6L474 845.7 L475 845.7L475 846.1 L476 846.1L476 846.0 L477 846.0L477 847.3 L478 847.3L478 846.4 L479 846.4L479 845.1 L480 845.1L480 843.1 L481 843.1L481 842.8 L482 842.8L482 844.0 L483 844.0L483 843.9 L484 843.9L484 842.9 L485 842.9L485 843.6 L486 843.6L486 845.3 L487 845.3L487 845.9 L488 845.9L488 846.6 L489 846.6L489 847.8 L490 847.8L490 848.0 L491 848.0L491 846.7 L492 846.7L492 844.0 L493 844.0L493 843.4 L494 843.4L494 843.1 L495 843.1L495 842.2 L496 842.2L496 843.8 L497 843.8L497 843.2 L498 843.2L498 844.5 L499 844.5L499 844.5 L500 844.5L500 846.8 L501 846.8L501 847.7 L502 847.7L502 847.2 L503 847.2L503 846.3 L504 846.3L504 844.5 L505 844.5L505 843.1 L506 843.1L506 844.1 L507 844.1L507 843.5 L508 843.5L508 845.2 L509 845.2L509 844.4 L510 844.4L510 844.3 L511 844.3L511 846.6 L512 846.6L512 847.5 L513 847.5L513 847.4 L514 847.4L514 847.9 L515 847.9L515 846.6 L516 846.6L516 843.7 L517 843.7L517 844.1 L518 844.1L518 844.7 L519 844.7L519 845.0 L520 845.0L520 845.1 L521 845.1L521 845.8 L522 845.8L522 846.1 L523 846.1L523 847.6 L524 847.6L524 848.0 L525 848.0L525 845.9 L526 845.9L526 843.5 L527 843.5L527 842.5 L528 842.5L528 843.3 L529 843.3L529 843.4 L530 843.4L530 843.6 L531 843.6L531 843.1 L532 843.1L532 842.4 L533 842.4L533 843.2 L534 843.2L534 843.4 L535 843.4L535 844.9 L536 844.9L536 845.1 L537 845.1L537 846.9 L538 846.9L538 847.1 L539 847.1L539 847.0 L540 847.0L540 843.0 L541 843.0L541 842.7 L542 842.7L542 843.2 L543 843.2L543 842.6 L544 842.6L544 843.4 L545 843.4L545 844.2 L546 844.2L546 846.4 L547 846.4L547 847.4 L548 847.4L548 848.0 L549 848.0L549 846.0 L550 846.0L550 844.4 L551 844.4L551 843.7 L552 843.7L552 844.2 L553 844.2L553 843.4 L554 843.4L554 844.1 L555 844.1L555 845.1 L556 845.1L556 845.3 L557 845.3L557 848.0 L558 848.0L558 847.1 L559 847.1L559 846.0 L560 846.0L560 844.1 L561 844.1L561 843.8 L562 843.8L562 843.5 L563 843.5L563 845.3 L564 845.3L564 845.1 L565 845.1L565 844.8 L566 844.8L566 844.4 L567 844.4L567 845.1 L568 845.1L568 846.9 L569 846.9L569 848.0 L570 848.0L570 847.2 L571 847.2L571 850 Z" fill="#729dd2"/>
<path d="M572 838L572 834.0 L573 834.0L573 833.3 L574 833.3L574 832.4 L575 832.4L575 832.6 L576 832.6L576 831.8 L577 831.8L577 832.4 L578 832.4L578 831.3 L579 831.3L579 831.6 L580 831.6L580 831.8 L581 831.8L581 833.7 L582 833.7L582 834.7 L583 834.7L583 835.5 L584 835.5L584 835.6 L585 835.6L585 835.8 L586 835.8L586 834.3 L587 834.3L587 831.7 L588 831.7L588 830.8 L589 830.8L589 830.8 L590 830.8L590 831.3 L591 831.3L591 832.5 L592 832.5L592 831.6 L593 831.6L593 833.5 L594 833.5L594 834.2 L595 834.2L595 835.8 L596 835.8L596 835.8 L597 835.8L597 835.0 L598 835.0L598 832.7 L599 832.7L599 831.0 L600 831.0L600 832.5 L601 832.5L601 832.9 L602 832.9L602 832.8 L603 832.8L603 833.2 L604 833.2L604 833.5 L605 833.5L605 834.2 L606 834.2L606 836.0 L607 836.0L607 835.0 L608 835.0L608 833.8 L609 833.8L609 832.9 L610 832.9L610 832.3 L611 832.3L611 832.6 L612 832.6L612 831.9 L613 831.9L613 833.3 L614 833.3L614 834.4 L615 834.4L615 834.3 L616 834.3L616 835.0 L617 835.0L617 833.8 L618 833.8L618 831.8 L619 831.8L619 831.8 L620 831.8L620 831.1 L621 831.1L621 831.0 L622 831.0L622 832.8 L623 832.8L623 832.8 L624 832.8L624 834.0 L625 834.0L625 836.0 L626 836.0L626 835.7 L627 835.7L627 834.9 L628 834.9L628 831.9 L629 831.9L629 831.5 L630 831.5L630 832.5 L631 832.5L631 833.1 L632 833.1L632 832.8 L633 832.8L633 832.9 L634 832.9L634 834.9 L635 834.9L635 835.9 L636 835.9L636 834.4 L637 834.4L637 831.7 L638 831.7L638 831.1 L639 831.1L639 830.8 L640 830.8L640 830.8 L641 830.8L641 830.9 L642 830.9L642 833.1 L643 833.1L643 834.5 L644 834.5L644 835.2 L645 835.2L645 835.0 L646 835.0L646 833.7 L647 833.7L647 833.2 L648 833.2L648 831.2 L649 831.2L649 831.7 L650 831.7L650 831.8 L651 831.8L651 831.1 L652 831.1L652 831.0 L653 831.0L653 832.3 L654 832.3L654 832.7 L655 832.7L655 832.2 L656 832.2L656 833.8 L657 833.8L657 834.9 L658 834.9L658 834.0 L659 834.0L659 835.7 L660 835.7L660 834.7 L661 834.7L661 831.7 L662 831.7L662 831.5 L663 831.5L663 831.8 L664 831.8L664 831.8 L665 831.8L665 830.7 L666 830.7L666 831.6 L667 831.6L667 831.6 L668 831.6L668 831.7 L669 831.7L669 833.0 L670 833.0L670 835.0 L671 835.0L671 835.9 L672 835.9L672 835.3 L673 835.3L673 833.1 L674 833.1L674 831.2 L675 831.2L675 831.3 L676 831.3L676 831.4 L677 831.4L677 832.5 L678 832.5L678 831.6 L679 831.6L679 833.2 L680 833.2L680 832.0 L681 832.0L681 833.6 L682 833.6L682 833.8 L683 833.8L683 834.5 L684 834.5L684 836.0 L685 836.0L685 835.0 L686 835.0L686 832.5 L687 832.5L687 830.0 L688 830.0L688 830.0 L689 830.0L689 831.1 L690 831.1L690 831.2 L691 831.2L691 831.0 L692 831.0L692 830.9 L693 830.9L693 831.3 L694 831.3L694 832.4 L695 832.4L695 833.0 L696 833.0L696 833.1 L697 833.1L697 833.8 L698 833.8L698 836.0 L699 836.0L699 835.2 L700 835.2L700 832.1 L701 832.1L701 830.1 L702 830.1L702 830.1 L703 830.1L703 830.8 L704 830.8L704 830.7 L705 830.7L705 830.6 L706 830.6L706 831.0 L707 831.0L707 830.7 L708 830.7L708 831.7 L709 831.7L709 832.6 L710 832.6L710 834.3 L711 834.3L711 834.3 L712 834.3L712 835.6 L713 835.6L713 834.0 L714 834.0L714 832.0 L715 832.0L715 831.0 L716 831.0L716 830.6 L717 830.6L717 831.4 L718 831.4L718 831.5 L719 831.5L719 831.1 L720 831.1L720 832.1 L721 832.1L721 832.2 L722 832.2L722 833.1 L723 833.1L723 835.2 L724 835.2L724 835.4 L725 835.4L725 834.1 L726 834.1L726 833.6 L727 833.6L727 830.9 L728 830.9L728 830.7 L729 830.7L729 831.3 L730 831.3L730 831.2 L731 831.2L731 832.7 L732 832.7L732 832.8 L733 832.8L733 832.0 L734 832.0L734 832.3 L735 832.3L735 834.0 L736 834.0L736 834.6 L737 834.6L737 834.1 L738 834.1L738 836.0 L739 836.0L739 833.7 L740 833.7L740 833.1 L741 833.1L741 830.5 L742 830.5L742 830.0 L743 830.0L743 831.2 L744 831.2L744 830.0 L745 830.0L745 831.2 L746 831.2L746 830.4 L747 830.4L747 831.8 L748 831.8L748 831.7 L749 831.7L749 831.8 L750 831.8L750 834.0 L751 834.0L751 834.9 L752 834.9L752 835.6 L753 835.6L753 835.6 L754 835.6L754 835.1 L755 835.1L755 831.6 L756 831.6L756 831.4 L757 831.4L757 831.2 L758 831.2L758 832.7 L759 832.7L759 831.8 L760 831.8L760 833.4 L761 833.4L761 833.5 L762 833.5L762 834.3 L763 834.3L763 835.9 L764 835.9L764 835.4 L765 835.4L765 833.8 L766 833.8L766 832.7 L767 832.7L767 830.5 L768 830.5L768 830.0 L769 830.0L769 830.4 L770 830.4L770 831.2 L771 831.2L771 831.3 L772 831.3L772 831.5 L773 831.5L773 832.3 L774 832.3L774 832.8 L775 832.8L775 834.2 L776 834.2L776 835.0 L777 835.0L777 835.4 L778 835.4L778 834.9 L779 834.9L779 831.4 L780 831.4L780 830.0 L781 830.0L781 830.3 L782 830.3L782 830.3 L783 830.3L783 831.2 L784 831.2L784 831.9 L785 831.9L785 832.6 L786 832.6L786 833.5 L787 833.5L787 834.0 L788 834.0L788 835.7 L789 835.7L789 835.1 L790 835.1L790 834.3 L791 834.3L791 832.7 L792 832.7L792 831.9 L793 831.9L793 831.1 L794 831.1L794 831.8 L795 831.8L795 831.6 L796 831.6L796 832.0 L797 832.0L797 833.2 L798 833.2L798 834.6 L799 834.6L799 836.0 L800 836.0L800 835.4 L801 835.4L801 835.4 L802 835.4L802 832.2 L803 832.2L803 838 Z" fill="#729dd2"/>
<path d="M572 850L572 845.7 L573 845.7L573 844.1 L574 844.1L574 843.5 L575 843.5L575 842.5 L576 842.5L576 844.2 L577 844.2L577 843.4 L578 843.4L578 843.8 L579 843.8L579 844.3 L580 844.3L580 845.0 L581 845.0L581 844.4 L582 844.4L582 846.6 L583 846.6L583 846.5 L584 846.5L584 846.8 L585 846.8L585 846.3 L586 846.3L586 844.7 L587 844.7L587 843.4 L588 843.4L588 843.2 L589 843.2L589 844.5 L590 844.5L590 844.4 L591 844.4L591 844.6 L592 844.6L592 845.3 L593 845.3L593 844.4 L594 844.4L594 845.3 L595 845.3L595 846.3 L596 846.3L596 848.0 L597 848.0L597 847.3 L598 847.3L598 846.2 L599 846.2L599 845.5 L600 845.5L600 843.0 L601 843.0L601 844.5 L602 844.5L602 843.9 L603 843.9L603 845.0 L604 845.0L604 843.8 L605 843.8L605 844.0 L606 844.0L606 844.5 L607 844.5L607 846.4 L608 846.4L608 847.6 L609 847.6L609 847.4 L610 847.4L610 847.3 L611 847.3L611 846.9 L612 846.9L612 843.2 L613 843.2L613 842.0 L614 842.0L614 842.8 L615 842.8L615 842.2 L616 842.2L616 842.9 L617 842.9L617 842.0 L618 842.0L618 842.0 L619 842.0L619 843.7 L620 843.7L620 844.7 L621 844.7L621 844.4 L622 844.4L622 846.9 L623 846.9L623 847.8 L624 847.8L624 846.3 L625 846.3L625 843.4 L626 843.4L626 842.0 L627 842.0L627 842.0 L628 842.0L628 842.4 L629 842.4L629 842.0 L630 842.0L630 842.4 L631 842.4L631 842.4 L632 842.4L632 844.0 L633 844.0L633 844.6 L634 844.6L634 846.1 L635 846.1L635 847.9 L636 847.9L636 847.3 L637 847.3L637 843.4 L638 843.4L638 843.3 L639 843.3L639 843.7 L640 843.7L640 843.7 L641 843.7L641 842.4 L642 842.4L642 843.6 L643 843.6L643 844.3 L644 844.3L644 845.2 L645 845.2L645 846.2 L646 846.2L646 846.1 L647 846.1L647 847.4 L648 847.4L648 845.9 L649 845.9L649 844.7 L650 844.7L650 844.4 L651 844.4L651 843.2 L652 843.2L652 844.1 L653 844.1L653 844.0 L654 844.0L654 843.8 L655 843.8L655 844.1 L656 844.1L656 844.4 L657 844.4L657 845.3 L658 845.3L658 846.1 L659 846.1L659 846.8 L660 846.8L660 847.7 L661 847.7L661 846.8 L662 846.8L662 846.3 L663 846.3L663 844.6 L664 844.6L664 843.2 L665 843.2L665 842.0 L666 842.0L666 842.3 L667 842.3L667 843.1 L668 843.1L668 843.1 L669 843.1L669 843.4 L670 843.4L670 843.4 L671 843.4L671 842.6 L672 842.6L672 844.8 L673 844.8L673 844.3 L674 844.3L674 844.9 L675 844.9L675 846.1 L676 846.1L676 847.4 L677 847.4L677 847.1 L678 847.1L678 846.0 L679 846.0L679 845.0 L680 845.0L680 842.4 L681 842.4L681 843.3 L682 843.3L682 842.7 L683 842.7L683 843.6 L684 843.6L684 842.9 L685 842.9L685 842.7 L686 842.7L686 843.0 L687 843.0L687 844.3 L688 844.3L688 845.7 L689 845.7L689 846.6 L690 846.6L690 847.6 L691 847.6L691 847.2 L692 847.2L692 846.5 L693 846.5L693 844.4 L694 844.4L694 843.6 L695 843.6L695 845.0 L696 845.0L696 844.6 L697 844.6L697 845.1 L698 845.1L698 845.0 L699 845.0L699 846.9 L700 846.9L700 846.8 L701 846.8L701 847.2 L702 847.2L702 847.1 L703 847.1L703 844.2 L704 844.2L704 843.0 L705 843.0L705 843.7 L706 843.7L706 842.9 L707 842.9L707 843.8 L708 843.8L708 844.8 L709 844.8L709 844.5 L710 844.5L710 845.1 L711 845.1L711 844.0 L712 844.0L712 844.7 L713 844.7L713 845.6 L714 845.6L714 846.9 L715 846.9L715 847.3 L716 847.3L716 847.8 L717 847.8L717 846.4 L718 846.4L718 844.8 L719 844.8L719 842.3 L720 842.3L720 843.1 L721 843.1L721 842.7 L722 842.7L722 844.4 L723 844.4L723 843.7 L724 843.7L724 844.1 L725 844.1L725 845.2 L726 845.2L726 847.3 L727 847.3L727 847.5 L728 847.5L728 846.2 L729 846.2L729 844.0 L730 844.0L730 842.9 L731 842.9L731 842.4 L732 842.4L732 842.0 L733 842.0L733 842.4 L734 842.4L734 843.3 L735 843.3L735 842.8 L736 842.8L736 842.2 L737 842.2L737 843.7 L738 843.7L738 844.4 L739 844.4L739 845.0 L740 845.0L740 845.2 L741 845.2L741 845.9 L742 845.9L742 848.0 L743 848.0L743 846.3 L744 846.3L744 843.7 L745 843.7L745 843.0 L746 843.0L746 842.0 L747 842.0L747 843.4 L748 843.4L748 842.3 L749 842.3L749 842.7 L750 842.7L750 845.3 L751 845.3L751 845.8 L752 845.8L752 848.0 L753 848.0L753 846.1 L754 846.1L754 843.5 L755 843.5L755 842.9 L756 842.9L756 842.3 L757 842.3L757 843.5 L758 843.5L758 843.5 L759 843.5L759 843.7 L760 843.7L760 845.5 L761 845.5L761 846.2 L762 846.2L762 847.1 L763 847.1L763 846.9 L764 846.9L764 844.8 L765 844.8L765 842.3 L766 842.3L766 842.0 L767 842.0L767 843.1 L768 843.1L768 842.8 L769 842.8L769 842.0 L770 842.0L770 842.3 L771 842.3L771 843.0 L772 843.0L772 843.8 L773 843.8L773 844.5 L774 844.5L774 846.0 L775 846.0L775 847.3 L776 847.3L776 847.2 L777 847.2L777 845.1 L778 845.1L778 844.0 L779 844.0L779 843.4 L780 843.4L780 843.2 L781 843.2L781 844.5 L782 844.5L782 844.3 L783 844.3L783 843.9 L784 843.9L784 845.1 L785 845.1L785 844.2 L786 844.2L786 845.5 L787 845.5L787 847.0 L788 847.0L788 846.2 L789 846.2L789 847.6 L790 847.6L790 847.4 L791 847.4L791 844.3 L792 844.3L792 842.6 L793 842.6L793 844.1 L794 844.1L794 844.0 L795 844.0L795 844.2 L796 844.2L796 843.4 L797 843.4L797 843.2 L798 843.2L798 844.7 L799 844.7L799 844.9 L800 844.9L800 844.6 L801 844.6L801 846.0 L802 846.0L802 847.3 L803 847.3L803 850 Z" fill="#729dd2"/>
<path d="M804 838L804 834.7 L805 834.7L805 832.6 L806 832.6L806 830.0 L807 830.0L807 830.5 L808 830.5L808 830.0 L809 830.0L809 831.2 L810 831.2L810 830.8 L811 830.8L811 830.2 L812 830.2L812 830.7 L813 830.7L813 831.5 L814 831.5L814 832.3 L815 832.3L815 833.9 L816 833.9L816 834.7 L817 834.7L817 836.0 L818 836.0L818 834.3 L819 834.3L819 831.4 L820 831.4L820 830.0 L821 830.0L821 830.9 L822 830.9L822 830.7 L823 830.7L823 830.7 L824 830.7L824 830.0 L825 830.0L825 830.2 L826 830.2L826 831.0 L827 831.0L827 832.1 L828 832.1L828 834.3 L829 834.3L829 836.0 L830 836.0L830 835.1 L831 835.1L831 832.2 L832 832.2L832 830.0 L833 830.0L833 830.0 L834 830.0L834 831.1 L835 831.1L835 830.3 L836 830.3L836 830.1 L837 830.1L837 830.3 L838 830.3L838 831.1 L839 831.1L839 830.4 L840 830.4L840 831.5 L841 831.5L841 832.5 L842 832.5L842 833.1 L843 833.1L843 834.6 L844 834.6L844 835.1 L845 835.1L845 834.2 L846 834.2L846 830.9 L847 830.9L847 830.2 L848 830.2L848 830.8 L849 830.8L849 830.3 L850 830.3L850 830.5 L851 830.5L851 831.5 L852 831.5L852 831.7 L853 831.7L853 833.3 L854 833.3L854 834.3 L855 834.3L855 835.4 L856 835.4L856 835.1 L857 835.1L857 832.6 L858 832.6L858 830.2 L859 830.2L859 830.9 L860 830.9L860 830.2 L861 830.2L861 830.8 L862 830.8L862 830.0 L863 830.0L863 830.7 L864 830.7L864 831.2 L865 831.2L865 831.4 L866 831.4L866 832.1 L867 832.1L867 833.9 L868 833.9L868 835.2 L869 835.2L869 836.0 L870 836.0L870 835.0 L871 835.0L871 832.4 L872 832.4L872 832.0 L873 832.0L873 832.5 L874 832.5L874 831.3 L875 831.3L875 831.6 L876 831.6L876 832.9 L877 832.9L877 831.8 L878 831.8L878 832.6 L879 832.6L879 832.8 L880 832.8L880 833.7 L881 833.7L881 834.1 L882 834.1L882 835.1 L883 835.1L883 835.8 L884 835.8L884 835.3 L885 835.3L885 832.4 L886 832.4L886 831.2 L887 831.2L887 832.4 L888 832.4L888 832.5 L889 832.5L889 832.1 L890 832.1L890 831.5 L891 831.5L891 832.3 L892 832.3L892 832.3 L893 832.3L893 832.8 L894 832.8L894 832.7 L895 832.7L895 833.7 L896 833.7L896 835.3 L897 835.3L897 836.0 L898 836.0L898 834.6 L899 834.6L899 831.2 L900 831.2L900 830.0 L901 830.0L901 830.0 L902 830.0L902 830.9 L903 830.9L903 831.0 L904 831.0L904 830.6 L905 830.6L905 833.3 L906 833.3L906 833.7 L907 833.7L907 835.4 L908 835.4L908 834.2 L909 834.2L909 830.5 L910 830.5L910 831.1 L911 831.1L911 830.2 L912 830.2L912 831.3 L913 831.3L913 831.6 L914 831.6L914 831.9 L915 831.9L915 834.8 L916 834.8L916 835.2 L917 835.2L917 834.2 L918 834.2L918 833.0 L919 833.0L919 831.4 L920 831.4L920 832.0 L921 832.0L921 831.5 L922 831.5L922 832.8 L923 832.8L923 832.9 L924 832.9L924 833.5 L925 833.5L925 834.6 L926 834.6L926 835.0 L927 835.0L927 835.9 L928 835.9L928 835.6 L929 835.6L929 833.8 L930 833.8L930 832.2 L931 832.2L931 830.4 L932 830.4L932 830.0 L933 830.0L933 830.8 L934 830.8L934 830.9 L935 830.9L935 830.1 L936 830.1L936 831.3 L937 831.3L937 830.3 L938 830.3L938 832.8 L939 832.8L939 832.2 L940 832.2L940 834.5 L941 834.5L941 835.5 L942 835.5L942 835.5 L943 835.5L943 835.2 L944 835.2L944 832.5 L945 832.5L945 830.7 L946 830.7L946 831.6 L947 831.6L947 831.3 L948 831.3L948 832.8 L949 832.8L949 832.9 L950 832.9L950 834.1 L951 834.1L951 835.8 L952 835.8L952 834.2 L953 834.2L953 831.8 L954 831.8L954 831.3 L955 831.3L955 831.5 L956 831.5L956 830.6 L957 830.6L957 838 Z" fill="#729dd2"/>
<path d="M804 850L804 846.1 L805 846.1L805 844.3 L806 844.3L806 844.0 L807 844.0L807 844.3 L808 844.3L808 844.4 L809 844.4L809 843.6 L810 843.6L810 843.7 L811 843.7L811 843.2 L812 843.2L812 844.1 L813 844.1L813 844.3 L814 844.3L814 844.2 L815 844.2L815 844.9 L816 844.9L816 846.2 L817 846.2L817 846.5 L818 846.5L818 847.8 L819 847.8L819 846.3 L820 846.3L820 842.3 L821 842.3L821 842.4 L822 842.4L822 843.5 L823 843.5L823 842.6 L824 842.6L824 843.3 L825 843.3L825 845.3 L826 845.3L826 846.0 L827 846.0L827 846.9 L828 846.9L828 846.2 L829 846.2L829 845.7 L830 845.7L830 843.2 L831 843.2L831 844.9 L832 844.9L832 843.7 L833 843.7L833 845.2 L834 845.2L834 845.6 L835 845.6L835 844.5 L836 844.5L836 845.9 L837 845.9L837 845.6 L838 845.6L838 847.4 L839 847.4L839 848.0 L840 848.0L840 846.9 L841 846.9L841 844.3 L842 844.3L842 842.3 L843 842.3L843 842.2 L844 842.2L844 842.0 L845 842.0L845 842.0 L846 842.0L846 843.7 L847 843.7L847 843.9 L848 843.9L848 844.0 L849 844.0L849 843.1 L850 843.1L850 844.3 L851 844.3L851 845.3 L852 845.3L852 846.7 L853 846.7L853 847.9 L854 847.9L854 846.3 L855 846.3L855 844.8 L856 844.8L856 842.0 L857 842.0L857 842.0 L858 842.0L858 842.5 L859 842.5L859 843.1 L860 843.1L860 842.0 L861 842.0L861 843.5 L862 843.5L862 842.1 L863 842.1L863 843.8 L864 843.8L864 843.3 L865 843.3L865 844.7 L866 844.7L866 845.1 L867 845.1L867 846.6 L868 846.6L868 848.0 L869 848.0L869 847.7 L870 847.7L870 846.2 L871 846.2L871 842.7 L872 842.7L872 842.6 L873 842.6L873 842.4 L874 842.4L874 842.8 L875 842.8L875 844.4 L876 844.4L876 845.2 L877 845.2L877 845.4 L878 845.4L878 847.4 L879 847.4L879 846.7 L880 846.7L880 844.0 L881 844.0L881 843.7 L882 843.7L882 843.5 L883 843.5L883 843.2 L884 843.2L884 844.0 L885 844.0L885 844.3 L886 844.3L886 844.7 L887 844.7L887 844.0 L888 844.0L888 845.1 L889 845.1L889 846.1 L890 846.1L890 848.0 L891 848.0L891 845.6 L892 845.6L892 845.0 L893 845.0L893 842.0 L894 842.0L894 842.0 L895 842.0L895 842.2 L896 842.2L896 842.0 L897 842.0L897 842.5 L898 842.5L898 842.6 L899 842.6L899 842.7 L900 842.7L900 843.1 L901 843.1L901 844.0 L902 844.0L902 844.1 L903 844.1L903 845.1 L904 845.1L904 845.7 L905 845.7L905 847.9 L906 847.9L906 846.1 L907 846.1L907 844.0 L908 844.0L908 843.0 L909 843.0L909 844.2 L910 844.2L910 843.6 L911 843.6L911 843.5 L912 843.5L912 843.6 L913 843.6L913 844.1 L914 844.1L914 844.8 L915 844.8L915 844.7 L916 844.7L916 845.1 L917 845.1L917 846.3 L918 846.3L918 846.1 L919 846.1L919 847.9 L920 847.9L920 847.2 L921 847.2L921 843.8 L922 843.8L922 844.0 L923 844.0L923 843.7 L924 843.7L924 844.3 L925 844.3L925 843.7 L926 843.7L926 844.0 L927 844.0L927 845.9 L928 845.9L928 845.7 L929 845.7L929 847.6 L930 847.6L930 846.0 L931 846.0L931 844.5 L932 844.5L932 842.5 L933 842.5L933 843.2 L934 843.2L934 843.0 L935 843.0L935 844.1 L936 844.1L936 844.2 L937 844.2L937 843.2 L938 843.2L938 844.5 L939 844.5L939 846.3 L940 846.3L940 847.5 L941 847.5L941 847.1 L942 847.1L942 845.7 L943 845.7L943 843.7 L944 843.7L944 842.6 L945 842.6L945 842.5 L946 842.5L946 844.0 L947 844.0L947 844.5 L948 844.5L948 844.4 L949 844.4L949 845.1 L950 845.1L950 846.1 L951 846.1L951 847.2 L952 847.2L952 847.5 L953 847.5L953 847.5 L954 847.5L954 847.3 L955 847.3L955 844.2 L956 844.2L956 842.4 L957 842.4L957 850 Z" fill="#729dd2"/>
<rect x="251" y="838" width="706" height="1" fill="#2f4057"/>
<rect x="251" y="826" width="1" height="24" fill="#8a9ab0"/>
<rect x="571" y="826" width="1" height="24" fill="#7a7a7a"/>
<rect x="803" y="826" width="1" height="24" fill="#7a7a7a"/>
<rect x="261.5" y="829.5" width="11" height="10.5" fill="#5c5c5c" stroke="#a0a0a0" stroke-width="1"/>
<rect x="583.1" y="829.5" width="11" height="10.5" fill="#5c5c5c" stroke="#a0a0a0" stroke-width="1"/>
<rect x="815.2" y="829.5" width="11" height="10.5" fill="#5c5c5c" stroke="#a0a0a0" stroke-width="1"/>
<rect x="372" y="707" width="1" height="231" fill="#2d8ceb"/>
<path d="M367 695 H378 V703 L374 707 H371 L367 703 Z" fill="#2d8ceb"/>
<rect x="372" y="704" width="1" height="2.6" fill="#111"/></svg>
<div class="t" style="left:23.5px;top:645px;font-size:12px;color:#9a9a9a">×</div>
<div class="t" style="left:43px;top:644px;font-size:13px;color:#c0c0c0">시퀀스 01</div>
<div class="t" style="left:32px;top:670px;font-size:16px;font-weight:bold;color:#2d8ceb">00:00:01:34</div>
<div class="t" style="left:251px;top:682px;font-size:12px;color:#a8a8a8">:00:00</div>
<div class="t" style="left:607px;top:682px;font-size:12px;color:#a8a8a8">00:00:04:59</div>
<div class="t" style="left:87px;top:729px;font-size:13px;color:#b0b0b0">V4</div>
<div class="t" style="left:87px;top:754px;font-size:13px;color:#b0b0b0">V3</div>
<div class="t" style="left:87px;top:779px;font-size:13px;color:#b0b0b0">V2</div>
<div class="t" style="left:87px;top:804px;font-size:13px;color:#d6d6d6">V1</div>
<div class="t" style="left:37px;top:804px;font-size:13px;color:#b0b0b0">V1</div>
<div class="t" style="left:87px;top:833.5px;font-size:13px;color:#d6d6d6">A1</div>
<div class="t" style="left:147px;top:833.5px;font-size:10.5px;color:#b0b0b0">M</div>
<div class="t" style="left:175.5px;top:833.5px;font-size:10px;color:#b8b8b8">S</div>
<div class="t" style="left:87px;top:858.5px;font-size:13px;color:#d6d6d6">A2</div>
<div class="t" style="left:147px;top:858.5px;font-size:10.5px;color:#b0b0b0">M</div>
<div class="t" style="left:175.5px;top:858.5px;font-size:10px;color:#b8b8b8">S</div>
<div class="t" style="left:87px;top:883.5px;font-size:13px;color:#d6d6d6">A3</div>
<div class="t" style="left:147px;top:883.5px;font-size:10.5px;color:#b0b0b0">M</div>
<div class="t" style="left:175.5px;top:883.5px;font-size:10px;color:#b8b8b8">S</div>
<div class="t" style="left:82px;top:906px;font-size:13px;color:#a8a8a8">혼합</div>
<div class="t" style="left:157px;top:908.5px;font-size:13.5px;color:#2d8ceb">0.0</div>
<div class="t" style="left:264px;top:752px;font-size:10px;font-style:italic;color:#3a2e00">fx</div>
<div class="t" style="left:264px;top:776px;font-size:10px;font-style:italic;color:#3a2a60">fx</div>
<div class="t" style="left:402.5px;top:801.5px;font-size:10px;font-style:italic;color:#3a2e00">fx</div>
<div class="t" style="left:585.5px;top:801.5px;font-size:10px;font-style:italic;color:#3a2e00">fx</div>
<div class="t" style="left:817.5px;top:801.5px;font-size:10px;font-style:italic;color:#3a2e00">fx</div>
<div class="t" style="left:264px;top:830.5px;font-size:10px;font-style:italic;color:#151515">fx</div>
<div class="t" style="left:585.5px;top:830.5px;font-size:10px;font-style:italic;color:#151515">fx</div>
<div class="t" style="left:817.5px;top:830.5px;font-size:10px;font-style:italic;color:#151515">fx</div>
<div class="t" style="left:281px;top:750px;font-size:12.5px;color:#161630">hi follow me if u ar</div>
<div class="t" style="left:281px;top:774.5px;font-size:12.5px;color:#161630">Screen_Recording_20251217_140914.mp4 [V]</div>
<div class="t" style="left:419px;top:797px;font-size:13px;color:#161630">ぼかし強.jfif</div>
<div class="t" style="left:602px;top:797px;font-size:13px;color:#161630">다운로드 (19).jfif</div>
<div class="t" style="left:834px;top:799.5px;font-size:12.5px;color:#161630">blue background.jfif</div>
</body></html>
